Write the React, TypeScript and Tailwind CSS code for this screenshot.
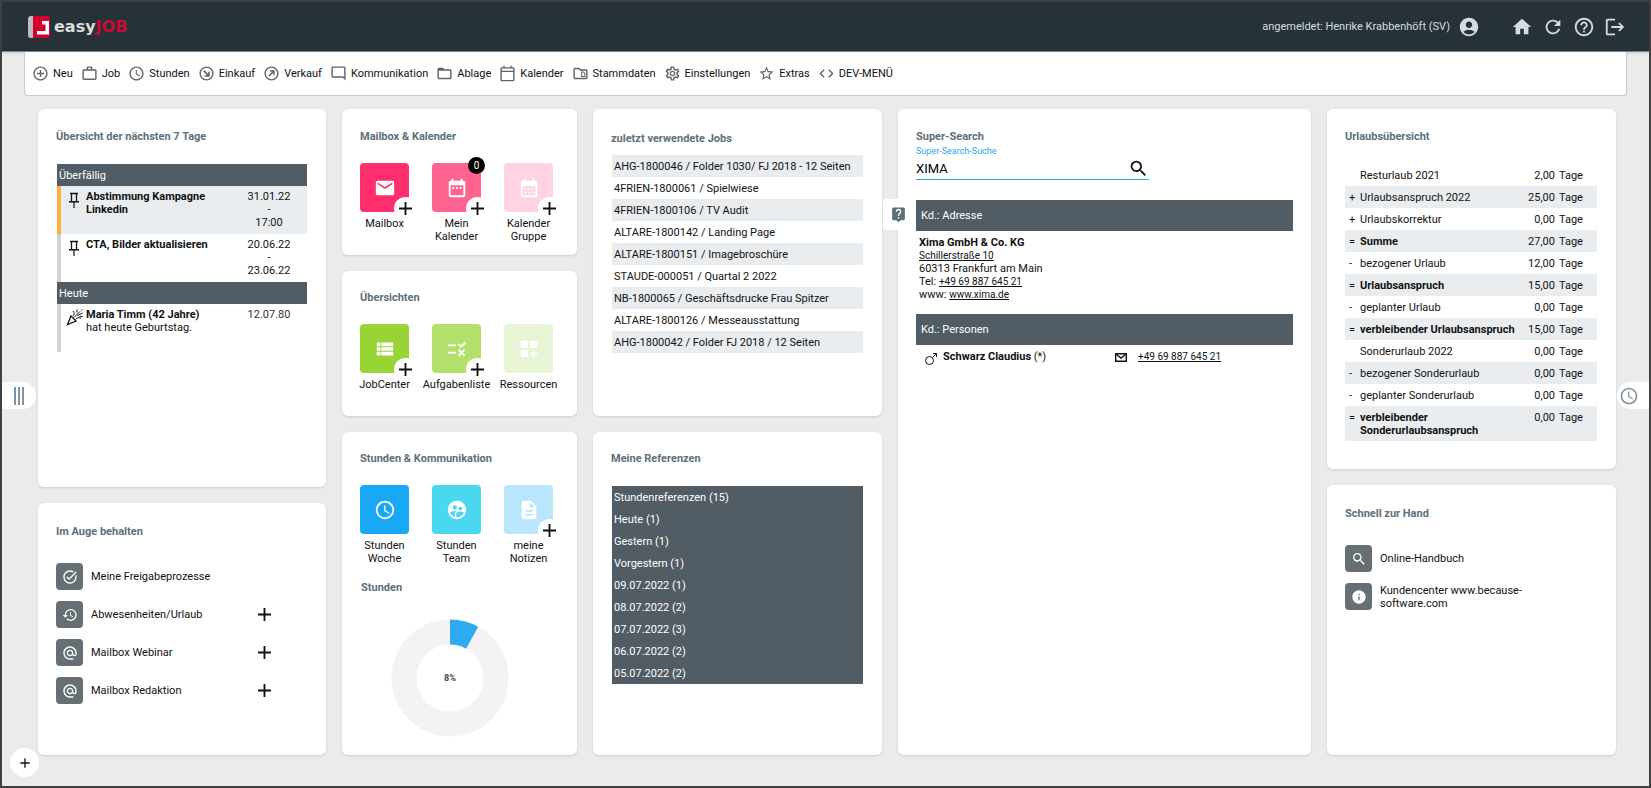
import type { ReactNode } from "react"

import type { IconType } from "react-icons"
import {
  MdAccountCircle,
  MdAdd,
  MdAddCircleOutline,
  MdAlternateEmail,
  MdCalendarMonth,
  MdCode,
  MdDashboardCustomize,
  MdDateRange,
  MdDescription,
  MdEmail,
  MdFolderOpen,
  MdHelpOutline,
  MdHistory,
  MdHome,
  MdInfo,
  MdLiveHelp,
  MdLogout,
  MdOutlineModeComment,
  MdOutlineSettings,
  MdOutlineSnippetFolder,
  MdRefresh,
  MdRule,
  MdSchedule,
  MdSearch,
  MdStarBorder,
  MdSupervisedUserCircle,
  MdTaskAlt,
  MdViewList,
  MdWorkOutline,
} from "react-icons/md"

type IconProps = { className?: string }

function CircleArrowDown({ className }: IconProps) {
  return (
    <svg viewBox="0 0 24 24" className={className} fill="none" stroke="currentColor" strokeWidth="2">
      <circle cx="12" cy="12" r="9" />
      <path d="M8 8l7 7M9.500 15.500h6v-6" strokeWidth="2.200" />
    </svg>
  )
}

function CircleArrowUp({ className }: IconProps) {
  return (
    <svg viewBox="0 0 24 24" className={className} fill="none" stroke="currentColor" strokeWidth="2">
      <circle cx="12" cy="12" r="9" />
      <path d="M8 16l7-7M10 8.500h5.500V14" />
    </svg>
  )
}

function Calendar({ className }: IconProps) {
  return (
    <svg viewBox="0 0 24 24" className={className} fill="none" stroke="currentColor" strokeWidth="2">
      <rect x="3" y="4" width="18" height="18" rx="1" />
      <path d="M3 9h18M7 1v3M17 1v3" />
    </svg>
  )
}

function Pin({ className }: IconProps) {
  return (
    <svg viewBox="0 0 12 16" className={className} fill="none" stroke="currentColor">
      <path d="M2 1.500h8M3.500 1.500v8M8.500 1.500v8" strokeWidth="1.300" />
      <path d="M1 9.800h10" strokeWidth="1.500" />
      <path d="M6 10v6" strokeWidth="1.200" />
    </svg>
  )
}

function Confetti({ className }: IconProps) {
  return (
    <svg viewBox="0 0 18 18" className={className} fill="none" stroke="currentColor">
      <path d="M5 8l5 5-8.500 3.500z" strokeWidth="1.300" />
      <path d="M8 9.500l6-6M9.500 11.500c1.500-2 3.500-2.500 5.500-1M7 8c1.500-1.500 1.500-3.500 0-5M11 4.500V1.500M11.500 7.500l5-2.500M16.500 1.500l-1 1M13.500 8.500h3" />
    </svg>
  )
}

function Male({ className }: IconProps) {
  return (
    <svg viewBox="0 0 14 14" className={className} fill="none" stroke="currentColor">
      <circle cx="5.500" cy="8.500" r="4" />
      <path d="M8.500 5.500L12.500 1.500M9 1.500h3.500V5" />
    </svg>
  )
}

function Envelope({ className }: IconProps) {
  return (
    <svg viewBox="0 0 14 14" className={className} fill="none" stroke="currentColor" strokeWidth="1.400">
      <path d="M1.700 3.700h10.600v7.600H1.700z" />
      <path d="M2.500 4.500L7 8l4.500-3.500" />
    </svg>
  )
}

const menu: { label: string; icon: IconType | typeof Pin }[] = [
  { label: "Neu", icon: MdAddCircleOutline },
  { label: "Job", icon: MdWorkOutline },
  { label: "Stunden", icon: MdSchedule },
  { label: "Einkauf", icon: CircleArrowDown },
  { label: "Verkauf", icon: CircleArrowUp },
  { label: "Kommunikation", icon: MdOutlineModeComment },
  { label: "Ablage", icon: MdFolderOpen },
  { label: "Kalender", icon: Calendar },
  { label: "Stammdaten", icon: MdOutlineSnippetFolder },
  { label: "Einstellungen", icon: MdOutlineSettings },
  { label: "Extras", icon: MdStarBorder },
  { label: "DEV-MENÜ", icon: MdCode },
]

const actions = [
  { label: "Startseite", icon: MdHome },
  { label: "Aktualisieren", icon: MdRefresh },
  { label: "Hilfe", icon: MdHelpOutline },
  { label: "Abmelden", icon: MdLogout },
]

const jobs = [
  "AHG-1800046 / Folder 1030/ FJ 2018 - 12 Seiten",
  "4FRIEN-1800061 / Spielwiese",
  "4FRIEN-1800106 / TV Audit",
  "ALTARE-1800142 / Landing Page",
  "ALTARE-1800151 / Imagebroschüre",
  "STAUDE-000051 / Quartal 2 2022",
  "NB-1800065 / Geschäftsdrucke Frau Spitzer",
  "ALTARE-1800126 / Messeausstattung",
  "AHG-1800042 / Folder FJ 2018 / 12 Seiten",
]

const references = [
  "Stundenreferenzen (15)",
  "Heute (1)",
  "Gestern (1)",
  "Vorgestern (1)",
  "09.07.2022 (1)",
  "08.07.2022 (2)",
  "07.07.2022 (3)",
  "06.07.2022 (2)",
  "05.07.2022 (2)",
]

const vacation = [
  { op: "", label: "Resturlaub 2021", days: "2,00" },
  { op: "+", label: "Urlaubsanspruch 2022", days: "25,00" },
  { op: "+", label: "Urlaubskorrektur", days: "0,00" },
  { op: "=", label: "Summe", days: "27,00" },
  { op: "-", label: "bezogener Urlaub", days: "12,00" },
  { op: "=", label: "Urlaubsanspruch", days: "15,00" },
  { op: "-", label: "geplanter Urlaub", days: "0,00" },
  { op: "=", label: "verbleibender Urlaubsanspruch", days: "15,00" },
  { op: "", label: "Sonderurlaub 2022", days: "0,00" },
  { op: "-", label: "bezogener Sonderurlaub", days: "0,00" },
  { op: "-", label: "geplanter Sonderurlaub", days: "0,00" },
  { op: "=", label: "verbleibender Sonderurlaubsanspruch", days: "0,00" },
]

const watched = [
  { label: "Meine Freigabeprozesse", icon: MdTaskAlt, add: false },
  { label: "Abwesenheiten/Urlaub", icon: MdHistory, add: true },
  { label: "Mailbox Webinar", icon: MdAlternateEmail, add: true },
  { label: "Mailbox Redaktion", icon: MdAlternateEmail, add: true },
]

function Plus({ className }: IconProps) {
  return (
    <svg viewBox="0 0 14 14" className={className} stroke="currentColor" strokeWidth="2">
      <path d="M7 0v14M0 7h14" />
    </svg>
  )
}

function Card({ title, className, children }: { title: string; className?: string; children: ReactNode }) {
  return (
    <section className={`rounded-md bg-white px-[18px] shadow-sm ${className ?? ""}`}>
      <h2 className="font-bold text-[#5c6f7a]">{title}</h2>
      {children}
    </section>
  )
}

type TileProps = { label: string; color: string; icon: IconType; add?: boolean; badge?: string }

function Tile({ label, color, icon: Icon, add, badge }: TileProps) {
  return (
    <div className="flex w-[49px] flex-col items-center gap-[5px]">
      <div className={`relative flex size-[49px] shrink-0 items-center justify-center rounded ${color}`}>
        <a href="#" aria-label={label}>
          <Icon className="size-[22px] text-white" />
        </a>
        {add && (
          <button
            aria-label={`${label} hinzufügen`}
            className="absolute -right-2 -bottom-2 flex size-[23px] items-center justify-center rounded-full bg-white"
          >
            <Plus className="size-[13px]" />
          </button>
        )}
        {badge && (
          <span className="absolute -top-1.5 -right-1 flex size-[17px] items-center justify-center rounded-full bg-black text-[10px] text-white">
            {badge}
          </span>
        )}
      </div>
      <a href="#" className="z-10 flex justify-center text-center">
        {label}
      </a>
    </div>
  )
}

function Shortcut({ label, icon: Icon, add }: { label: string; icon: IconType; add?: boolean }) {
  return (
    <li className="flex h-[27px] items-center">
      <a href="#" className="flex w-[202px] items-center gap-2">
        <span className="flex size-[27px] shrink-0 items-center justify-center rounded bg-[#666f73] text-white">
          <Icon className="size-4" />
        </span>
        {label}
      </a>
      {add && (
        <button aria-label={`${label} hinzufügen`}>
          <Plus className="size-[13px]" />
        </button>
      )}
    </li>
  )
}

function Header() {
  return (
    <header className="flex h-[50px] items-center justify-between border-b border-[#7b8386] bg-[#273238] pr-[23px] pl-[26px] text-[#d3dce0] shadow">
      <a href="#" className="flex items-center gap-1">
        <svg viewBox="0 0 22 22" className="size-[22px]">
          <rect width="22" height="22" rx="3" fill="#d6002f" />
          <path d="M3 0h2v22H3a3 3 0 0 1-3-3V3a3 3 0 0 1 3-3z" fill="#b9bdbf" />
          <path d="M14 5h7v13.500H9V15h8.500V8.500H14z" fill="#fff" />
        </svg>
        <span className="font-['DejaVu_Sans'] text-base leading-5 font-bold text-[#d8dcde]">
          easy<span className="text-[#c90a36]">JOB</span>
        </span>
      </a>
      <div className="flex items-center">
        <span>angemeldet: Henrike Krabbenhöft (SV)</span>
        <MdAccountCircle className="ml-2 size-[22px]" />
        <nav className="ml-[31px] flex gap-[9px]">
          {actions.map(({ label, icon: Icon }) => (
            <button key={label} aria-label={label}>
              <Icon className="size-[22px]" />
            </button>
          ))}
        </nav>
      </div>
    </header>
  )
}

function Menu() {
  return (
    <nav className="mr-[22px] ml-[22px] flex h-11 items-center gap-2 rounded-b border border-t-0 border-[#c3ccd1] bg-white px-[7px]">
      {menu.map(({ label, icon: Icon }) => (
        <a key={label} href="#" className="flex items-center gap-1">
          <Icon className="size-[17px] text-[#5f6468]" />
          {label}
        </a>
      ))}
    </nav>
  )
}

function WeekOverview() {
  return (
    <Card title="Übersicht der nächsten 7 Tage" className="min-h-[378px] pt-[21px]">
      <table className="mt-[21px] ml-px w-full max-w-[250px] table-fixed border-separate border-spacing-0">
        <colgroup>
          <col className="w-[29px]" />
          <col />
          <col className="w-[76px]" />
        </colgroup>
        <tbody className="align-top">
          <tr className="h-[22px] bg-[#525c64] text-left align-middle text-white">
            <th colSpan={3} className="px-0.5 font-normal">Überfällig</th>
          </tr>
          <tr className="h-12 bg-[#e9edf0]">
            <td className="border-l-4 border-[#fbb040] pt-1.5 pl-[7px]">
              <Pin className="h-4 w-3" />
            </td>
            <td className="pt-1 font-bold">Abstimmung Kampagne Linkedin</td>
            <td className="pt-1 text-center">31.01.22<br />-<br />17:00</td>
          </tr>
          <tr className="h-12">
            <td className="border-l-4 border-[#d2d2d2] pt-1.5 pl-[7px]">
              <Pin className="h-4 w-3" />
            </td>
            <td className="pt-1 font-bold">CTA, Bilder aktualisieren</td>
            <td className="pt-1 text-center">20.06.22<br />-<br />23.06.22</td>
          </tr>
          <tr className="h-[22px] bg-[#525c64] text-left align-middle text-white">
            <th colSpan={3} className="px-0.5 font-normal">Heute</th>
          </tr>
          <tr className="h-12">
            <td className="border-l-4 border-[#d2d2d2] pt-1 pl-[5px]">
              <Confetti className="size-[18px]" />
            </td>
            <td className="pt-1">
              <b>Maria Timm (42 Jahre)</b>
              <br />
              hat heute Geburtstag.
            </td>
            <td className="pt-1 text-center text-[#333]">12.07.80</td>
          </tr>
        </tbody>
      </table>
    </Card>
  )
}

function HoursChart() {
  return (
    <svg viewBox="-60 -60 120 120" className="mx-auto size-[120px]" role="img" aria-label="Stunden 8%">
      <circle r="46" fill="none" stroke="#f3f3f3" strokeWidth="25" />
      <circle r="46" fill="none" stroke="#2fabf5" strokeWidth="25" pathLength="100" strokeDasharray="8 92" transform="rotate(-90)" />
      <text textAnchor="middle" y="3" className="fill-[#444] text-[9px] font-bold">8%</text>
    </svg>
  )
}

function SuperSearch() {
  return (
    <Card title="Super-Search" className="grow pt-[21px]">
      <form className="w-[233px] border-b border-[#1ea7f0]">
        <label htmlFor="super-search" className="block pt-0.5 text-[9px] text-[#1ea7f0]">
          Super-Search-Suche
        </label>
        <div className="flex h-[21px] items-center justify-between">
          <input id="super-search" defaultValue="XIMA" className="w-[180px] text-[13px] text-black outline-none" />
          <button aria-label="Suchen">
            <MdSearch className="size-[21px]" />
          </button>
        </div>
      </form>
      <h3 className="mt-5 flex h-[31px] items-center bg-[#525c64] px-[5px] text-white">Kd.: Adresse</h3>
      <address className="mt-[5px] pl-[3px] not-italic">
        <b>Xima GmbH &amp; Co. KG</b>
        <br />
        <a href="#" className="text-[10px] underline">Schillerstraße 10</a>
        <br />
        60313 Frankfurt am Main
        <br />
        Tel: <a href="#" className="text-[10px] underline">+49 69 887 645 21</a>
        <br />
        www: <a href="#" className="text-[10px] underline">www.xima.de</a>
      </address>
      <h3 className="mt-[13px] flex h-[31px] items-center bg-[#525c64] px-[5px] text-white">Kd.: Personen</h3>
      <div className="mt-[5px] flex pl-2">
        <Male className="mt-0.5 size-[14px]" />
        <span className="ml-[5px] w-[171px]">
          <b>Schwarz Claudius</b> (*)
        </span>
        <Envelope className="size-[14px]" />
        <a href="#" className="ml-[10px] text-[10px] underline">+49 69 887 645 21</a>
      </div>
    </Card>
  )
}

function Vacation() {
  return (
    <Card title="Urlaubsübersicht" className="min-h-[360px] pt-[21px]">
      <table className="mt-[21px] w-full max-w-[252px] table-fixed">
        <colgroup>
          <col className="w-[15px]" />
          <col />
          <col className="w-8" />
          <col className="w-[42px]" />
        </colgroup>
        <tbody className="align-top">
          {vacation.map(({ op, label, days }) => (
            <tr key={label} className="h-[22px] even:bg-[#e9edf0]">
              <td className="pt-[5px] pb-1 pl-1">{op}</td>
              <td className={op === "=" ? "pt-[5px] pb-1 font-bold" : "pt-[5px] pb-1"}>{label}</td>
              <td className="pt-[5px] pb-1 text-right">{days}</td>
              <td className="pt-[5px] pb-1 pl-1">Tage</td>
            </tr>
          ))}
        </tbody>
      </table>
    </Card>
  )
}

export default function App() {
  return (
    <div className="relative flex min-h-screen flex-col border-2 border-[#404143] bg-[#ebebeb] font-[Roboto,sans-serif] text-[11px] leading-[13px] text-[#111]">
      <Header />
      <Menu />

      <main className="grid grow grid-cols-[288fr_235fr_289fr_413fr_289fr] gap-4 pt-[13px] pr-[33px] pb-[31px] pl-9">
        <div className="flex flex-col gap-4">
          <WeekOverview />
          <Card title="Im Auge behalten" className="grow pt-[22px]">
            <ul className="mt-[25px] flex flex-col gap-[11px]">
              {watched.map((item) => (
                <Shortcut key={item.label} {...item} />
              ))}
            </ul>
          </Card>
        </div>

        <div className="flex flex-col gap-4">
          <Card title="Mailbox & Kalender" className="min-h-[146px] pt-[21px]">
            <div className="mt-5 flex gap-[23px]">
              <Tile label="Mailbox" color="bg-[#ff2e6c]" icon={MdEmail} add />
              <Tile label="Mein Kalender" color="bg-[#ff6491]" icon={MdDateRange} add badge="0" />
              <Tile label="Kalender Gruppe" color="bg-[#ffd3df]" icon={MdCalendarMonth} add />
            </div>
          </Card>
          <Card title="Übersichten" className="min-h-[145px] pt-5">
            <div className="mt-5 flex gap-[23px]">
              <Tile label="JobCenter" color="bg-[#98d435]" icon={MdViewList} add />
              <Tile label="Aufgabenliste" color="bg-[#b2e06a]" icon={MdRule} add />
              <Tile label="Ressourcen" color="bg-[#e8f5d5]" icon={MdDashboardCustomize} />
            </div>
          </Card>
          <Card title="Stunden & Kommunikation" className="grow pt-5">
            <div className="mt-5 flex gap-[23px]">
              <Tile label="Stunden Woche" color="bg-[#18a8f5]" icon={MdSchedule} />
              <Tile label="Stunden Team" color="bg-[#49d8ef]" icon={MdSupervisedUserCircle} />
              <Tile label="meine Notizen" color="bg-[#b9e5fd]" icon={MdDescription} add />
            </div>
            <h3 className="mt-4 mb-6 pl-px font-bold text-[#5c6f7a]">Stunden</h3>
            <div className="pr-5">
              <HoursChart />
            </div>
          </Card>
        </div>

        <div className="flex flex-col gap-4">
          <Card title="zuletzt verwendete Jobs" className="min-h-[307px] pt-[23px]">
            <ul className="mx-px mt-[10px]">
              {jobs.map((job) => (
                <li key={job} className="flex h-[22px] items-center px-0.5 odd:bg-[#e9edf0]">
                  <a href="#">{job}</a>
                </li>
              ))}
            </ul>
          </Card>
          <Card title="Meine Referenzen" className="grow pt-5">
            <ul className="mx-px mt-[21px] bg-[#525c64] text-white">
              {references.map((reference) => (
                <li key={reference} className="flex h-[22px] items-center px-0.5">
                  <a href="#">{reference}</a>
                </li>
              ))}
            </ul>
          </Card>
        </div>

        <div className="relative flex flex-col">
          <SuperSearch />
          <button
            aria-label="Hilfe zur Suche"
            className="absolute top-[90px] -left-[15px] flex size-[31px] items-center justify-center rounded bg-white text-[#5c6f7a]"
          >
            <MdLiveHelp className="size-[17px]" />
          </button>
        </div>

        <div className="flex flex-col gap-4">
          <Vacation />
          <Card title="Schnell zur Hand" className="grow pt-[22px]">
            <ul className="mt-[25px] flex flex-col gap-[11px]">
              <Shortcut label="Online-Handbuch" icon={MdSearch} />
              <Shortcut label="Kundencenter www.because-software.com" icon={MdInfo} />
            </ul>
          </Card>
        </div>
      </main>

      <button
        aria-label="Seitenleiste öffnen"
        className="absolute top-[380px] left-0 flex h-[27px] w-[34px] items-center justify-center gap-0.5 rounded-r-full bg-white"
      >
        <span className="h-[18px] w-0.5 bg-[#7f95a5]" />
        <span className="h-[18px] w-0.5 bg-[#7f95a5]" />
        <span className="h-[18px] w-0.5 bg-[#7f95a5]" />
      </button>
      <button
        aria-label="Zeiterfassung öffnen"
        className="absolute top-[380px] right-0 flex h-[27px] w-8 items-center rounded-l-full bg-white pl-0.5 text-[#7f95a5]"
      >
        <MdSchedule className="size-5" />
      </button>
      <button
        aria-label="Neu anlegen"
        className="absolute bottom-[9px] left-2 flex size-[29px] items-center justify-center rounded-full bg-white"
      >
        <MdAdd className="size-4" />
      </button>
    </div>
  )
}
